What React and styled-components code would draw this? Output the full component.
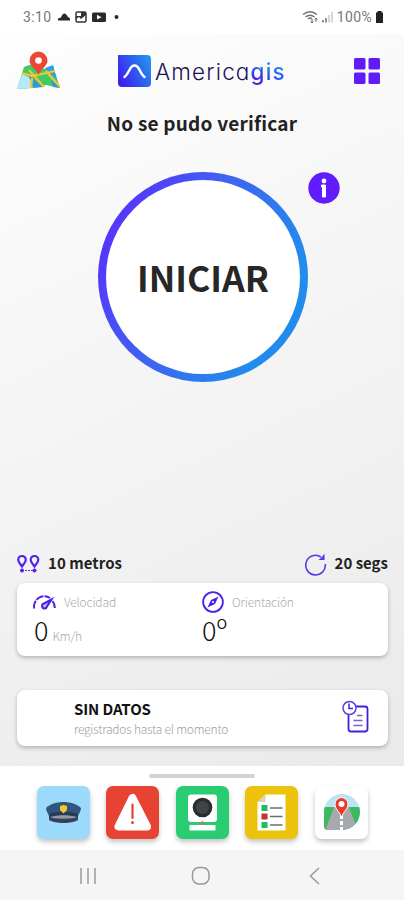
import styled, { createGlobalStyle } from "styled-components";

const GlobalStyle = createGlobalStyle`
  * {
    box-sizing: border-box;
  }
  body {
    margin: 0;
    background: #ffffff;
    font-family: "Noto Sans CJK SC", "Noto Sans", sans-serif;
    color: #222222;
  }
`;
const Screen = styled.div`
  display: flex;
  flex-direction: column;
  width: 404px;
  height: 900px;
  overflow: hidden;
`;
const StatusBar = styled.div`
  display: flex;
  justify-content: space-between;
  align-items: center;
  height: 34px;
  padding: 0 20px 0 23px;
  background-color: #ffffff;
  font-family: Roboto, sans-serif;
  font-size: 14px;
  color: #777777;
`;
const StatusGroup = styled.div`
  display: flex;
  align-items: center;
  gap: ${(props) => props.$gap}px;
`;
const Clock = styled.span`
  letter-spacing: 0.4px;
`;
const Percent = styled.span`
  letter-spacing: 0.35px;
`;
const Content = styled.main`
  display: flex;
  flex-direction: column;
  height: 732px;
  background: linear-gradient(155deg, #fefefe 0%, #f6f6f6 38%, #eaeaea 100%);
`;
const Header = styled.header`
  display: flex;
  justify-content: space-between;
  align-items: center;
  height: 74px;
  padding: 0 24px 0 17px;
`;
const Logo = styled.div`
  display: flex;
  align-items: center;
  gap: 4px;
  margin-left: -10px;
`;
const LogoText = styled.span`
  width: 131px;
  margin-top: 2px;
  font-family: Inter, sans-serif;
  font-size: 22.5px;
  font-weight: 300;
  line-height: 30px;
  letter-spacing: 1.15px;
  font-feature-settings: "cv11";
  white-space: nowrap;
  color: #1e1558;
`;
const LogoAccent = styled.span`
  font-weight: 500;
  color: transparent;
  background: linear-gradient(200deg, #2196ee 15%, #226bf2 50%, #4a16ea 85%);
  background-clip: text;
`;
const Title = styled.h1`
  margin: 0;
  height: 64px;
  font-size: 19px;
  font-weight: 700;
  line-height: 30px;
  letter-spacing: 0.22px;
  text-align: center;
`;
const StartArea = styled.section`
  display: grid;
  grid-template-columns: 98px 210px 1fr;
  height: 210px;
`;
const StartButton = styled.button`
  grid-column: 2;
  width: 210px;
  height: 210px;
  padding: 0 0 2px;
  border: 8px solid transparent;
  border-radius: 50%;
  background: linear-gradient(#ffffff, #ffffff) padding-box,
    linear-gradient(115deg, #5930fa 8%, #3f62f2 42%, #228cec 80%) border-box;
  font-family: inherit;
  font-size: 35.5px;
  font-weight: 700;
  letter-spacing: 0;
  color: #272727;
`;
const Metrics = styled.div`
  display: flex;
  justify-content: space-between;
  align-items: center;
  height: 38px;
  margin-top: 163px;
  padding: 0 16px 0 17px;
`;
const Metric = styled.div`
  display: flex;
  align-items: center;
  gap: 8px;
  font-size: 15px;
  font-weight: 700;
  line-height: 20px;
  letter-spacing: ${(props) => props.$spacing}px;
`;
const MetricText = styled.span`
  margin-top: -2px;
`;
const Card = styled.section`
  display: flex;
  height: ${(props) => props.$height}px;
  margin: ${(props) => props.$top || 0}px 16px 0 17px;
  padding: ${(props) => props.$padding};
  border-radius: 8px;
  background-color: #ffffff;
  box-shadow: 0 2px 4px rgba(0, 0, 0, 0.25);
`;
const Reading = styled.div`
  width: 169px;
`;
const ReadingLabel = styled.div`
  display: flex;
  align-items: center;
  gap: 8px;
  height: 22px;
  font-size: 12px;
  font-weight: 300;
  letter-spacing: -0.15px;
  color: #aaaaaa;
`;
const LabelText = styled.span`
  margin-top: -2px;
`;
const Value = styled.div`
  display: flex;
  align-items: baseline;
  gap: 4px;
  height: 38px;
  padding-left: ${(props) => props.$indent || 0}px;
  font-size: 27px;
  font-weight: 300;
  line-height: 33px;
  color: #111111;
`;
const Unit = styled.span`
  font-size: 12px;
  letter-spacing: -0.2px;
  color: #aaaaaa;
`;
const RecordText = styled.div`
  flex: 1;
`;
const RecordTitle = styled.div`
  height: 21px;
  font-size: 15px;
  font-weight: 700;
  line-height: 18px;
  letter-spacing: -0.1px;
  color: #111111;
`;
const RecordNote = styled.div`
  font-size: 12px;
  font-weight: 300;
  line-height: 16px;
  letter-spacing: -0.22px;
  color: #a0a0a0;
`;
const Sheet = styled.footer`
  height: 84px;
  padding-top: 8px;
  background-color: #ffffff;
`;
const Handle = styled.div`
  width: 106px;
  height: 4px;
  margin: 0 auto 8px;
  border-radius: 2px;
  background-color: #d3d3d3;
`;
const Actions = styled.div`
  display: flex;
  gap: 16.5px;
  padding-left: 36.5px;
`;
const ActionButton = styled.button`
  width: 53px;
  height: 53px;
  padding: 0;
  border: none;
  border-radius: 7px;
  background-color: ${(props) => props.$color};
  box-shadow: 0 3px 5px rgba(0, 0, 0, 0.23);
  svg {
    display: block;
  }
`;
const NavBar = styled.nav`
  display: flex;
  justify-content: space-between;
  align-items: center;
  height: 50px;
  padding: 2px 84px 0 79px;
  background-color: #f5f5f5;
`;

const MapIcon = () => (
  <svg width="43" height="40" viewBox="0 0 43 40">
    <path d="M7 16 15 13 28 18 36 15 43 37 29 34 15 37 0 38Z" fill="#3fca63" />
    <path d="M5 23 14 27 14 37 0 38Z" fill="#b8e8fb" />
    <path d="M28 17 36 14 40 29Z" fill="#2f9fe8" />
    <path d="M11 24 26 36 17 37Z M34 28 43 37 36 36Z" fill="#2c98df" />
    <path d="M5 22 15 25 38 20M12 19 27 36M29 20 43 36M15 27 14 37" fill="none" stroke="#f3c33c" strokeWidth="2.3" />
    <path d="M21.500 24C18.500 17 12.500 15 12.500 9.500a9 9 0 0 1 18 0c0 5.500-6 7.500-9 14.500Z" fill="#ee4538" />
    <circle cx="21.500" cy="9.500" r="3.300" fill="#fff" />
  </svg>
);

const LogoMark = () => (
  <svg width="33" height="32" viewBox="0 0 33 32">
    <defs>
      <linearGradient id="mark" x1="0" y1="0.700" x2="1" y2="0.200">
        <stop offset="0" stopColor="#3b20ee" />
        <stop offset="1" stopColor="#2492ee" />
      </linearGradient>
    </defs>
    <path d="M0 0H29a4 4 0 0 1 4 4V28a4 4 0 0 1-4 4H4a4 4 0 0 1-4-4Z" fill="url(#mark)" />
    <path d="M6.500 22C12 18 11 10.500 16.500 10.500S21 18 26.500 22" fill="none" stroke="#fff" strokeWidth="2.500" strokeLinecap="round" />
  </svg>
);

const PinsIcon = () => (
  <svg width="23" height="18" viewBox="0 0 23 18">
    <path d="M5 11.500C3.500 9 1.200 7.500 1.200 4.800a3.800 3.800 0 0 1 7.600 0C8.800 7.500 6.500 9 5 11.500ZM17.500 11.500c-1.500-2.500-3.800-4-3.800-6.700a3.800 3.800 0 0 1 7.600 0C21.300 7.500 19 9 17.500 11.500Z" fill="none" stroke="#5224ed" strokeWidth="2.200" />
    <path d="M5 15.500H17.500" stroke="#5224ed" strokeWidth="1.200" strokeDasharray="2 1" />
    <circle cx="5" cy="15.500" r="2" fill="#5224ed" />
    <circle cx="17.500" cy="15.500" r="2" fill="#5224ed" />
  </svg>
);

const RefreshIcon = () => (
  <svg width="23" height="23" viewBox="0 0 23 23">
    <path d="M17 4A9.800 9.800 0 1 0 21.300 11" fill="none" stroke="#5a35ed" strokeWidth="1.600" />
    <path d="M20.500 0.500V7H14.500L17.500 4.500Z" fill="#5a35ed" />
  </svg>
);

const GaugeIcon = () => (
  <svg width="23" height="15" viewBox="0 0 23 15">
    <path d="M1.200 13.500A10.300 10.300 0 0 1 17 3M19.500 6A11 11 0 0 1 21.800 13" fill="none" stroke="#4920e6" strokeWidth="2" strokeDasharray="8 1" />
    <path d="M18.500 4.500 14 11.500a2.500 2.500 0 1 1-3-3Z" fill="#cbbcf8" stroke="#4920e6" strokeWidth="2" />
  </svg>
);

const CompassIcon = () => (
  <svg width="22" height="22" viewBox="0 0 22 22">
    <circle cx="11" cy="11" r="9.900" fill="none" stroke="#4a20e8" strokeWidth="1.800" />
    <path d="M16.500 5.500 13 13 5.500 16.500 9 9Z" fill="#4a20e8" />
    <circle cx="11" cy="11" r="1.100" fill="#fff" />
  </svg>
);

const RecordsIcon = () => (
  <svg width="27" height="33" viewBox="0 0 27 33">
    <path d="M14 6.500H23a2.500 2.500 0 0 1 2.500 2.500V29a2.500 2.500 0 0 1-2.500 2.500H9A2.500 2.500 0 0 1 6.500 29V14" fill="none" stroke="#4220df" strokeWidth="1.800" />
    <path d="M15 15.500H20.500M11.500 20.500H20.500M11.500 25.500H20.500" stroke="#7862dc" strokeWidth="1.500" />
    <circle cx="7.500" cy="8" r="6.500" fill="#fff" stroke="#5a42df" strokeWidth="1.500" />
    <path d="M7 3.500V8.500H11" fill="none" stroke="#4220df" strokeWidth="1.500" />
  </svg>
);

const PoliceIcon = () => (
  <svg width="53" height="53" viewBox="0 0 53 53">
    <path d="M9 22C13 18 20 16 26.500 16S40 18 44 22C44 25 42 27 41 30V34C36 38 17 38 12 34V30C11 27 9 25 9 22Z" fill="#32557f" />
    <path d="M12.500 28C20 25 33 25 40.500 28L41 32C31 28.500 22 28.500 12 32Z" fill="#263b58" />
    <path d="M13 31C22 28.500 31 28.500 40 31 36 33 17 33 13 31Z" fill="#9897a9" />
    <path d="M12 32C21 34 32 34 41 32 38 38 15 38 12 32Z" fill="#3c3d4b" />
    <path d="M23 20 26.500 19 30 20V24L26.500 27.500 23 24Z" fill="#f0ca27" />
  </svg>
);

const WarningIcon = () => (
  <svg width="53" height="53" viewBox="0 0 53 53">
    <path d="M26.500 12 12.500 40.500H41Z" fill="#fff" stroke="#fff" strokeWidth="8" strokeLinejoin="round" />
    <path d="M26.500 18.500V32" stroke="#e64332" strokeWidth="2.200" strokeLinecap="round" />
    <circle cx="26.500" cy="36.500" r="1.500" fill="#e64332" />
  </svg>
);

const CameraIcon = () => (
  <svg width="53" height="53" viewBox="0 0 53 53">
    <rect x="12" y="8.500" width="29" height="27.500" rx="3" fill="#fff" />
    <circle cx="26.500" cy="21.500" r="9.800" fill="#292d30" />
    <circle cx="26.500" cy="21.500" r="6.500" fill="#404447" />
    <path d="M23 37.500 26.500 35 30 37.500V39H23Z" fill="#789b80" />
    <rect x="13.500" y="39" width="26" height="5.500" rx="0.500" fill="#fff" />
  </svg>
);

const ListIcon = () => (
  <svg width="53" height="53" viewBox="0 0 53 53">
    <path d="M20.500 8.500H40.500V44.500H12.500V16Z" fill="#fff" />
    <path d="M20.500 8.500V16H12.500Z" fill="#d7d2c0" />
    <path d="M16.500 19H22.500V25H16.500ZM16.500 36H22.500V42H16.500Z" fill="#1fbd62" />
    <path d="M16.500 27.500H22.500V33.500H16.500Z" fill="#cf3028" />
    <path d="M25 22H37.500M25 30.500H37.500M25 39H37.500" stroke="#686d7a" strokeWidth="1.500" />
  </svg>
);

const RoadIcon = () => (
  <svg width="53" height="53" viewBox="0 0 53 53">
    <defs>
      <clipPath id="road">
        <path d="M9 27a18 18 0 1 1 18 17H13q-4 0-4-4Z" />
      </clipPath>
    </defs>
    <g clipPath="url(#road)">
      <path d="M9 8H45V45H9Z" fill="#bce3f5" />
      <path d="M9 21H45V45H9Z" fill="#3db960" />
      <path d="M19 21H34L43 45H10Z" fill="#a7a9ac" />
      <path d="M26.500 30V33M26.500 35V39M26.500 41V45" stroke="#fff" strokeWidth="3" />
    </g>
    <path d="M26.500 31C24 25 20 23 20 18a6.500 6.500 0 0 1 13 0c0 5-4 7-6.500 13Z" fill="#e93b2c" stroke="#fff" strokeWidth="1" />
    <circle cx="26.500" cy="18" r="3" fill="#fff" />
  </svg>
);

const actions = [
  { color: "#9bdafa", Icon: PoliceIcon },
  { color: "#e64332", Icon: WarningIcon },
  { color: "#29cc70", Icon: CameraIcon },
  { color: "#edc20b", Icon: ListIcon },
  { color: "#ffffff", Icon: RoadIcon },
];

const App = () => {
  return (
    <Screen>
      <GlobalStyle />
      <StatusBar>
        <StatusGroup $gap={5}>
          <Clock>3:10</Clock>
          <svg width="64" height="14" viewBox="0 0 64 14">
            <path d="M1 10.500V8.500L4 7.500C5 5 6 3.500 7.500 3.500S10 5.500 10.500 6.500L13 8.500V10.500Z" fill="#292929" />
            <rect x="19" y="2" width="10" height="10" rx="1.500" fill="#fff" stroke="#333" strokeWidth="1.500" />
            <path d="M19 9 22 7 24 9 29 5V2H24V6H19Z" fill="#333" />
            <rect x="35" y="2.500" width="14" height="9.500" rx="1.500" fill="#292929" />
            <path d="M40 4.800 44.500 7.200 40 9.600Z" fill="#fff" />
            <circle cx="59.500" cy="7" r="2" fill="#292929" />
          </svg>
        </StatusGroup>
        <StatusGroup $gap={3}>
          <svg width="32" height="14" viewBox="0 0 32 14">
            <path d="M1 4.500Q8 -1 15 4.500M3.500 7Q8 3.500 12.500 7M6 9Q8 7 10 9" fill="none" stroke="#737373" strokeWidth="1.500" />
            <path d="M10 9V13M14 12V8M8.500 11.500 10 13 11.500 11.500M12.500 9.500 14 8 15.500 9.500" fill="none" stroke="#666" />
            <path d="M21 10V12.500M24 8V12.500" stroke="#777" strokeWidth="1.600" />
            <path d="M27 5V12.500M30 2V12.500" stroke="#ccc" strokeWidth="1.600" />
          </svg>
          <Percent>100%</Percent>
          <svg width="9" height="12" viewBox="0 0 9 12">
            <path d="M2.500 0H6.500V1.500H8V12H1V1.500H2.500Z" fill="#222" />
          </svg>
        </StatusGroup>
      </StatusBar>
      <Content>
        <Header>
          <MapIcon />
          <Logo>
            <LogoMark />
            <LogoText>
              America<LogoAccent>gis</LogoAccent>
            </LogoText>
          </Logo>
          <svg width="26" height="26" viewBox="0 0 26 26" fill="#601cf5">
            <rect width="11.500" height="11.500" rx="1.500" />
            <rect x="14.500" width="11.500" height="11.500" rx="1.500" />
            <rect y="14.500" width="11.500" height="11.500" rx="1.500" />
            <rect x="14.500" y="14.500" width="11.500" height="11.500" rx="1.500" />
          </svg>
        </Header>
        <Title>No se pudo verificar</Title>
        <StartArea>
          <StartButton>INICIAR</StartButton>
          <svg width="32" height="32" viewBox="0 0 32 32">
            <circle cx="16" cy="16" r="15.700" fill="#601cff" />
            <circle cx="16" cy="9" r="2.400" fill="#fff" />
            <path d="M13.500 13H17.500V25H14.500V15H13.500Z" fill="#fff" stroke="#fff" strokeLinejoin="round" />
          </svg>
        </StartArea>
        <Metrics>
          <Metric $spacing={0.05}>
            <PinsIcon />
            <MetricText>10 metros</MetricText>
          </Metric>
          <Metric $spacing={0}>
            <RefreshIcon />
            <MetricText>20 segs</MetricText>
          </Metric>
        </Metrics>
        <Card $height={73} $padding="8px 16px">
          <Reading>
            <ReadingLabel>
              <GaugeIcon />
              <LabelText>Velocidad</LabelText>
            </ReadingLabel>
            <Value $indent={1}>
              0<Unit>Km/h</Unit>
            </Value>
          </Reading>
          <Reading>
            <ReadingLabel>
              <CompassIcon />
              <LabelText>Orientación</LabelText>
            </ReadingLabel>
            <Value>0º</Value>
          </Reading>
        </Card>
        <Card $height={56} $top={34} $padding="10px 19px 10px 57px">
          <RecordText>
            <RecordTitle>SIN DATOS</RecordTitle>
            <RecordNote>registrados hasta el momento</RecordNote>
          </RecordText>
          <RecordsIcon />
        </Card>
      </Content>
      <Sheet>
        <Handle />
        <Actions>
          {actions.map(({ color, Icon }) => (
            <ActionButton key={color} $color={color}>
              <Icon />
            </ActionButton>
          ))}
        </Actions>
      </Sheet>
      <NavBar>
        <svg width="18" height="18" viewBox="0 0 18 18" stroke="#999" strokeWidth="1.500">
          <path d="M2 1V17M9 1V17M16 1V17" />
        </svg>
        <svg width="24" height="20" viewBox="0 0 24 20">
          <rect x="1.500" y="1.500" width="16.500" height="16.500" rx="6.500" fill="none" stroke="#999" strokeWidth="1.500" />
        </svg>
        <svg width="11" height="18" viewBox="0 0 11 18">
          <path d="M10 1 1.500 9 10 17" fill="none" stroke="#999" strokeWidth="1.500" />
        </svg>
      </NavBar>
    </Screen>
  );
};

export default App;
